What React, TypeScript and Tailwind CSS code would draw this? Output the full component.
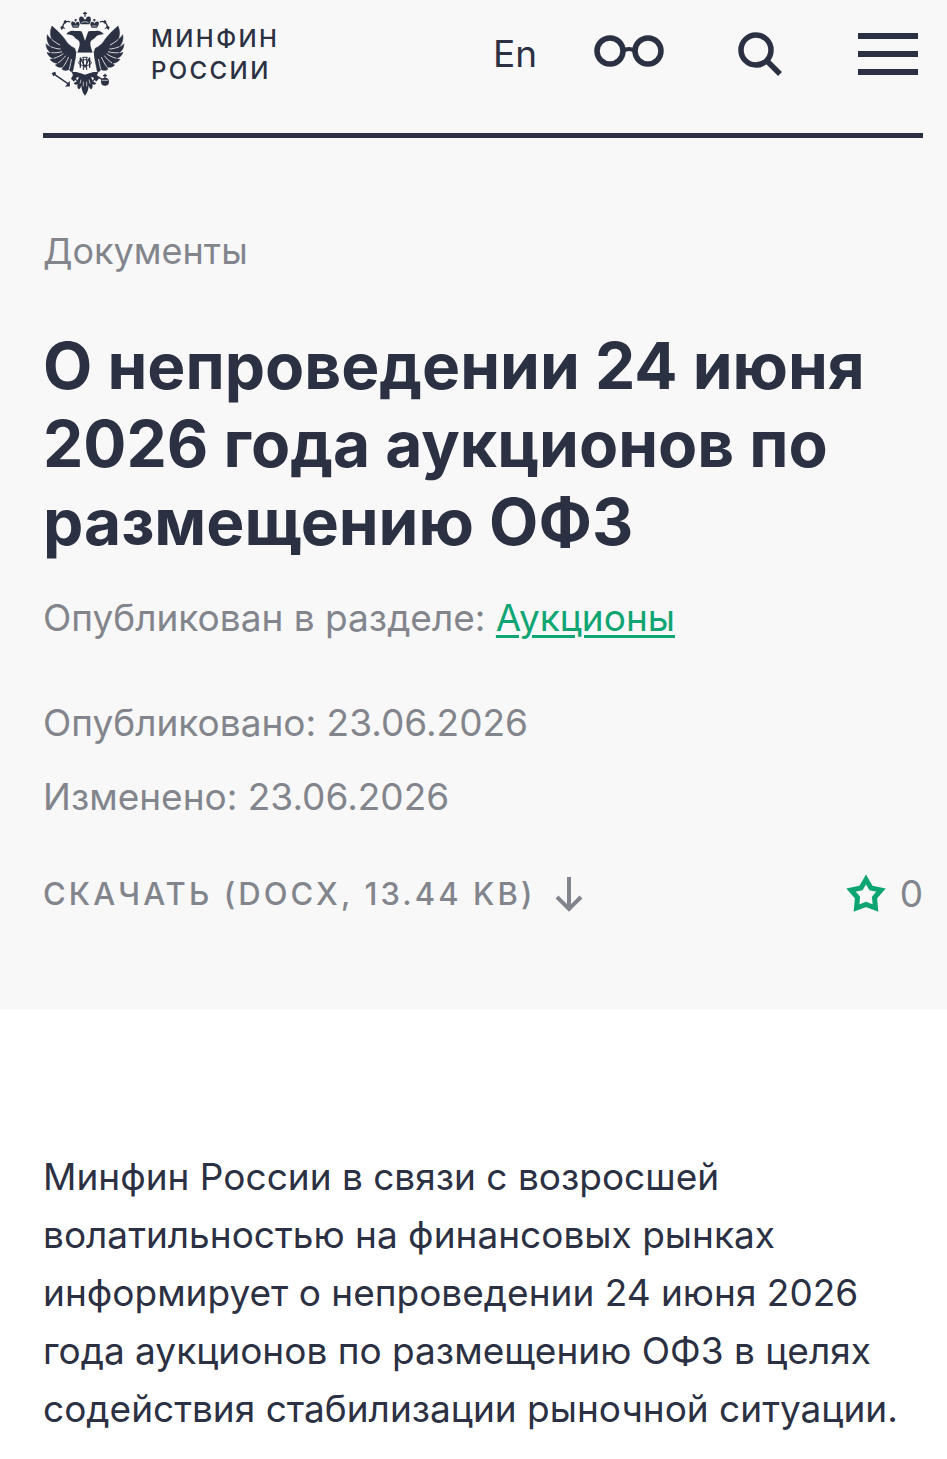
import { useState } from "react";

const MENU_BARS = [0, 1, 2];

const WING =
  "M66 79C78 90 92 102 104 118C112 132 122 140 134 146L139 160L134 186L128 216C122 218 119 213 118 208C112 213 104 214 96 209C98 206 99 204 100 201C92 205 82 203 76 196C79 195 82 193 84 190C76 192 66 188 60 179C64 179 68 178 71 176C62 175 54 168 51 158C55 160 60 160 64 159C55 155 48 145 48 132C52 137 57 140 62 141C54 132 49 119 52 105C56 111 60 116 65 119C60 106 60 91 66 79Z";

function Wing() {
  return (
    <g>
      <path d={WING} fill="currentColor" stroke="currentColor" strokeWidth="1.5" />
      <path
        d="M65 119C74 127 82 132 90 136M62 141C72 145 82 148 92 148M64 159C76 160 86 159 96 156M71 176C82 173 92 168 100 162M84 190C93 184 101 176 107 168M100 201C107 191 112 181 116 172M118 208C121 196 123 187 124 178"
        fill="none"
        stroke="#f8f8f8"
        strokeWidth="2.5"
      />
    </g>
  );
}

function SideCrown() {
  return (
    <g>
      <path d="M125 66C121 72 126 79 129 84H145C149 78 151 71 146 67C142 65 138 68 137 72C135 67 129 64 125 66Z" fill="currentColor" />
      <path d="M137 58V66M133 61H141" stroke="currentColor" strokeWidth="3" />
      <path d="M130 79H144" stroke="#f8f8f8" strokeWidth="2" />
      <path d="M121 67C113 64 106 65 102 71L97 82" fill="none" stroke="currentColor" strokeWidth="4" />
      <path d="M91 82L98 78L107 88L100 86L94 91ZM101 64L107 61L110 69L103 73Z" fill="currentColor" />
    </g>
  );
}

function EagleHead() {
  return (
    <path
      d="M109 104C114 96 123 92 133 94C143 95 151 92 157 97C164 103 165 113 165 126V159H142C145 149 150 139 149 129C147 119 137 119 133 112C129 106 119 105 109 104Z"
      fill="currentColor"
    />
  );
}

function Emblem() {
  return (
    <svg viewBox="45 34 240 255" className="h-[85px] w-20 shrink-0" aria-hidden="true">
      <Wing />
      <SideCrown />
      <EagleHead />
      <g transform="matrix(-1 0 0 1 330 0)">
        <Wing />
        <SideCrown />
        <EagleHead />
      </g>
      <path d="M156 97L165 123L174 97L165 91Z" fill="#f8f8f8" />
      <path d="M165 36V51M159 41H171" stroke="currentColor" strokeWidth="4" />
      <path d="M151 51C145 55 147 63 152 74H178C183 64 185 55 179 51C173 49 168 53 168 59H162C162 53 157 49 151 51Z" fill="currentColor" />
      <path d="M154 69C161 65 169 65 176 69" fill="none" stroke="#f8f8f8" strokeWidth="2" />
      <path d="M138 159H192V212L165 219L138 212Z" fill="#f8f8f8" />
      <g fill="none" stroke="currentColor" strokeWidth="4">
        <path d="M151 204V174L165 202L179 174V204" />
        <path d="M157 173H173M160 173V211M170 173V211" strokeWidth="3" />
        <ellipse cx="165" cy="189" rx="19" ry="9" strokeWidth="3" />
      </g>
      <path
        d="M125 218C134 215 143 218 150 220L165 225L180 220C187 218 196 215 205 218L201 226L207 237L198 246L195 241L187 246L192 235L184 231C184 240 192 247 199 251C196 256 190 256 187 253C189 260 188 266 183 269C179 266 177 262 176 257C176 267 173 279 165 288C157 279 154 267 154 257C153 262 151 266 147 269C142 266 141 260 143 253C140 256 134 256 131 251C138 247 146 240 146 231L138 235L143 246L135 241L132 246L123 237L129 226Z"
        fill="currentColor"
      />
      <path d="M153 240L150 252M177 240L180 252M160 246V260M170 246V260" stroke="#f8f8f8" strokeWidth="2" />
      <path d="M70 222L117 254" stroke="currentColor" strokeWidth="4" />
      <path d="M65 220L76 216L78 224L70 230ZM113 251L119 244L120 260L105 261L110 255Z" fill="currentColor" />
      <path d="M225 222V238M219 228H231M202 230L217 240" stroke="currentColor" strokeWidth="4" />
      <circle cx="225" cy="246" r="12" fill="currentColor" />
      <path d="M216 242H234" stroke="#f8f8f8" strokeWidth="2" />
    </svg>
  );
}

function Header() {
  return (
    <header className="flex h-[138px] items-start justify-between border-b-[5px] border-[#2b3042] pt-[11px]">
      <a href="#home" className="ml-0.5 flex items-start gap-[26px]">
        <Emblem />
        <span className="pt-3 text-2xl leading-8 font-medium tracking-widest">
          МИНФИН
          <br />
          РОССИИ
        </span>
      </a>
      <div className="mr-[5px] flex items-center pt-2">
        <a href="#en" className="mr-14 text-[37px] leading-[70px]">
          En
        </a>
        <button aria-label="Версия для слабовидящих" className="mr-[72px] pb-1.5">
          <svg viewBox="0 0 72 34" className="h-[34px] w-[72px]" fill="none" stroke="currentColor">
            <circle cx="17" cy="17" r="13" strokeWidth="5.5" />
            <circle cx="55" cy="17" r="13" strokeWidth="5.5" />
            <path d="M30 17Q36 13 42 17" strokeWidth="4" />
          </svg>
        </button>
        <button aria-label="Поиск" className="mr-[75px] pb-0.5">
          <svg viewBox="0 0 46 46" className="size-[46px]" fill="none" stroke="currentColor" strokeWidth="5.5">
            <circle cx="19" cy="20" r="15" />
            <path d="M29.500 30.500L43 44" />
          </svg>
        </button>
        <button aria-label="Меню" className="flex w-[60px] flex-col gap-3">
          {MENU_BARS.map((bar) => (
            <span key={bar} className="h-1.5 w-full bg-[#2b3042]" />
          ))}
        </button>
      </div>
    </header>
  );
}

function DownloadRow() {
  const [starred, setStarred] = useState(false);

  return (
    <div className="flex items-center justify-between pt-[49px]">
      <a href="#docx" className="flex items-center gap-5 text-[31px] leading-[48px] font-medium tracking-widest">
        СКАЧАТЬ (DOCX, 13.44 KB)
        <svg viewBox="0 0 28 36" className="h-9 w-7" fill="none" stroke="currentColor" strokeWidth="4">
          <path d="M14 1V33M2 21L14 33L26 21" />
        </svg>
      </a>
      <button
        aria-label="В избранное"
        aria-pressed={starred}
        onClick={() => setStarred(!starred)}
        className="flex items-center gap-3.5"
      >
        <svg
          viewBox="0 0 40 40"
          className="size-10 text-[#0fa573]"
          fill={starred ? "currentColor" : "none"}
          stroke="currentColor"
          strokeWidth="5"
        >
          <path d="M20 5.500L25 14L35 16L28.500 23.500L29.500 34L20 30.500L10.500 34L11.500 23.500L5 16L15 14Z" />
        </svg>
        <span>{starred ? 1 : 0}</span>
      </button>
    </div>
  );
}

export default function App() {
  return (
    <div className="min-h-screen bg-white font-['Inter','Liberation_Sans',sans-serif] text-[#2b3042]">
      <div className="bg-[#f8f8f8] pr-6 pb-[91px] pl-[43px]">
        <Header />
        <div className="text-[37px] leading-[48px] text-[#83858d]">
          <p className="pt-[89px] text-4xl leading-[48px]">Документы</p>
          <h1 className="pt-[52px] text-[64px] leading-[78px] font-bold text-[#2b3042]">
            О непроведении 24 июня 2026 года аукционов по размещению ОФЗ
          </h1>
          <p className="pt-[33px]">
            Опубликован в разделе:{" "}
            <a href="#auctions" className="text-[#0fa573] underline decoration-[3px] underline-offset-4">
              Аукционы
            </a>
          </p>
          <p className="pt-[57px]">Опубликовано: 23.06.2026</p>
          <p className="pt-[26px]">Изменено: 23.06.2026</p>
          <DownloadRow />
        </div>
      </div>
      <main className="pt-[139px] pr-4 pb-5 pl-[43px]">
        <p className="text-[37px] leading-[58px]">
          Минфин России в связи с возросшей волатильностью на финансовых рынках
          информирует о непроведении 24 июня 2026 года аукционов по размещению
          ОФЗ в целях содействия стабилизации рыночной ситуации.
        </p>
      </main>
    </div>
  );
}
